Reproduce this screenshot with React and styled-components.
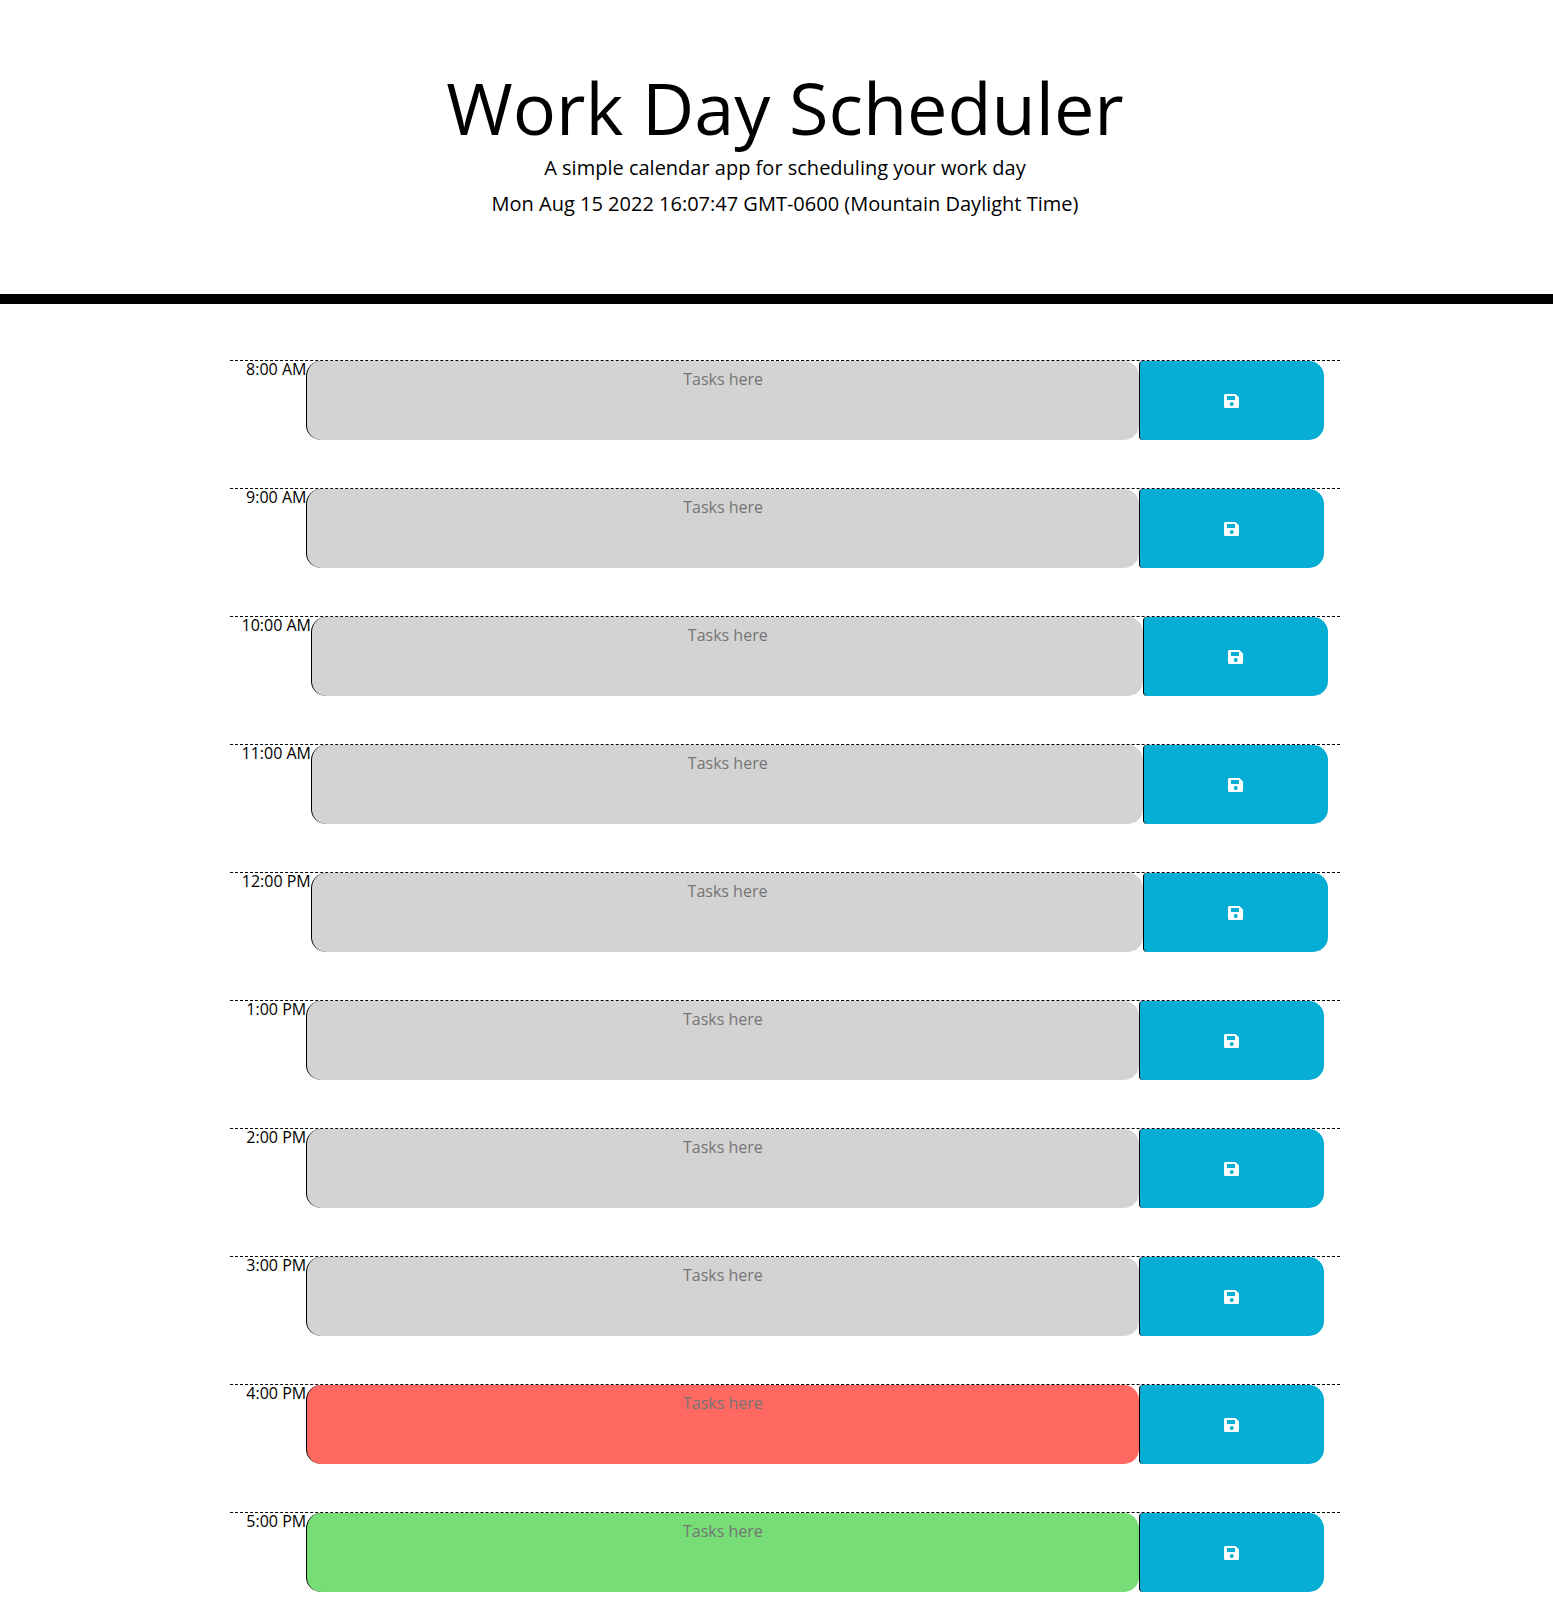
import React from 'react';
import styled, { createGlobalStyle } from 'styled-components';

const GlobalStyle = createGlobalStyle`
  *, *::before, *::after { box-sizing: border-box; }
  html { overflow: hidden; }
  body {
    margin: 0;
    background: #fff;
    color: #000;
    font-family: 'Open Sans', 'Noto Sans', sans-serif;
    font-size: 16px;
    line-height: 1;
  }
`;

const Page = styled.div`
  width: 1570px;
  height: 1616px;
  overflow: hidden;
`;

const Header = styled.header`
  height: 304px;
  padding-top: 64px;
  border-bottom: 10px solid #000;
  text-align: center;
`;

const Title = styled.h1`
  margin: 0 0 2px;
  font-size: 72px;
  font-weight: 400;
  line-height: 87px;
`;

const Lead = styled.p`
  margin: 0 0 6px;
  font-size: 20px;
  line-height: 30px;
`;

const Schedule = styled.main`
  width: 1110px;
  margin: 56px auto 0;
`;

const TimeBlock = styled.form`
  display: flex;
  justify-content: center;
  height: 80px;
  margin-bottom: 48px;
  border-top: 1px dashed #000;
`;

const Hour = styled.label`
  flex: none;
  line-height: 16px;
  white-space: nowrap;
`;

const COLORS = { past: '#d3d3d3', present: '#ff6961', future: '#77dd77' };

const Task = styled.textarea`
  flex: none;
  width: 832.5px;
  height: 79px;
  margin: 0;
  padding: 6px 12px;
  border: 0;
  border-left: 1px solid #000;
  border-radius: 15px;
  outline: none;
  resize: none;
  overflow: hidden;
  background: ${({ $period }) => COLORS[$period]};
  font: inherit;
  line-height: 24px;
  text-align: center;

  &::placeholder { color: #757575; opacity: 1; }
`;

const SaveButton = styled.button`
  display: flex;
  flex: none;
  align-items: center;
  justify-content: center;
  width: 185px;
  height: 79px;
  padding: 0 1px 0 0;
  border: 0;
  border-left: 1px solid #000;
  border-radius: 4px 15px 15px 4px;
  background: #06aed5;
  color: #fff;
`;

const SaveIcon = () => (
  <svg width="15" height="14" viewBox="0 0 15 14" fill="currentColor" fillRule="evenodd" aria-hidden="true">
    <path d="M1.5 0H11.5L15 3.4V12.5Q15 14 13.5 14H1.5Q0 14 0 12.5V1.5Q0 0 1.5 0ZM3 2V6H11V2ZM7.7 8A2 2 0 1 0 7.7 12A2 2 0 1 0 7.7 8Z" />
  </svg>
);

const HOURS = [
  ['8:00 AM', 'past'],
  ['9:00 AM', 'past'],
  ['10:00 AM', 'past'],
  ['11:00 AM', 'past'],
  ['12:00 PM', 'past'],
  ['1:00 PM', 'past'],
  ['2:00 PM', 'past'],
  ['3:00 PM', 'past'],
  ['4:00 PM', 'present'],
  ['5:00 PM', 'future'],
];

export default function App() {
  return (
    <Page>
      <GlobalStyle />
      <Header>
        <Title>Work Day Scheduler</Title>
        <Lead>A simple calendar app for scheduling your work day</Lead>
        <Lead>Mon Aug 15 2022 16:07:47 GMT-0600 (Mountain Daylight Time)</Lead>
      </Header>
      <Schedule>
        {HOURS.map(([hour, period], i) => (
          <TimeBlock key={hour}>
            <Hour htmlFor={`task-${i}`}>{hour}</Hour>
            <Task id={`task-${i}`} $period={period} placeholder="Tasks here" />
            <SaveButton type="button" aria-label="Save">
              <SaveIcon />
            </SaveButton>
          </TimeBlock>
        ))}
      </Schedule>
    </Page>
  );
}
